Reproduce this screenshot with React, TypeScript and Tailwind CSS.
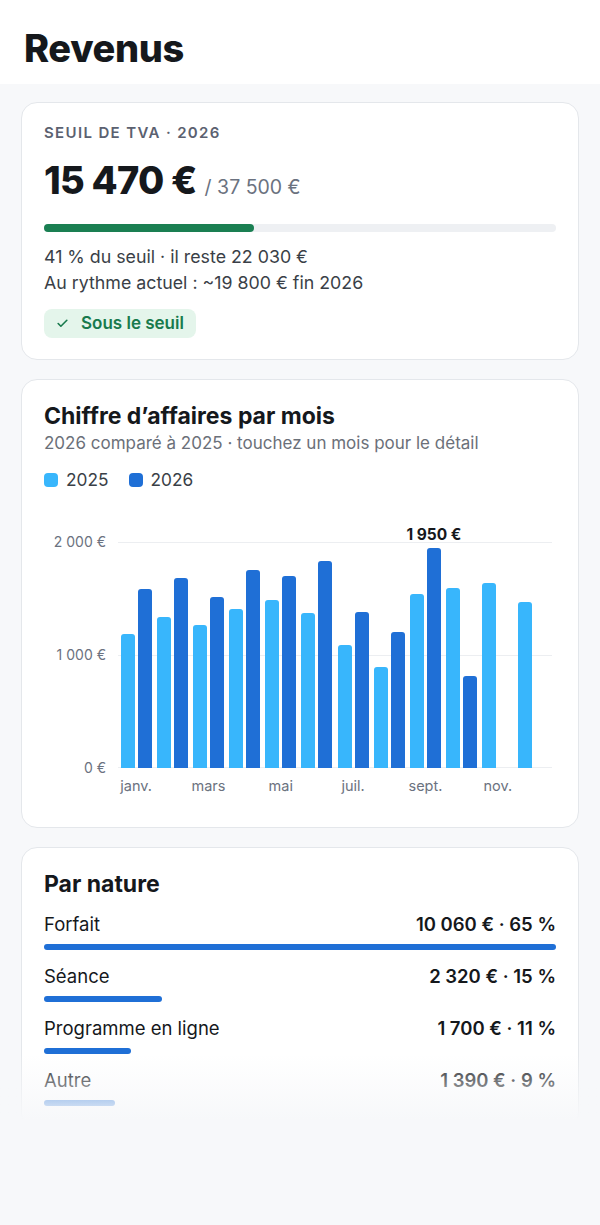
import { Check } from "lucide-react";

const months = [
  "janv.",
  "févr.",
  "mars",
  "avr.",
  "mai",
  "juin",
  "juil.",
  "août",
  "sept.",
  "oct.",
  "nov.",
  "déc.",
];

const sales2025 = [1190, 1340, 1270, 1410, 1490, 1370, 1090, 890, 1540, 1590, 1640, 1470];
const sales2026: (number | null)[] = [1580, 1680, 1510, 1750, 1700, 1830, 1380, 1200, 1950, 810, null, null];

const CHART_MAX = 2000;
const PLOT_H = 226;

const natures = [
  { label: "Forfait", amount: "10 060 €", pct: 65 },
  { label: "Séance", amount: "2 320 €", pct: 15 },
  { label: "Programme en ligne", amount: "1 700 €", pct: 11 },
  { label: "Autre", amount: "1 390 €", pct: 9 },
];

const Card = ({ children, className = "" }: { children: React.ReactNode; className?: string }) => (
  <section className={`rounded-2xl border border-[#e4e7eb] bg-white px-[22px] ${className}`}>{children}</section>
);

const MonthlyChart = () => {
  const best = Math.max(...sales2026.map((v) => v ?? 0));

  return (
    <div className="mt-[50px] flex">
      {/* y axis */}
      <div className="-mt-2 flex h-[242px] w-[62px] flex-col items-end justify-between text-[14px] leading-4 text-[#6b7280]">
        <span>2 000 €</span>
        <span>1 000 €</span>
        <span>0 €</span>
      </div>

      <div className="ml-3 mr-1 flex-1">
        <div className="relative" style={{ height: PLOT_H }}>
          <div className="absolute inset-x-0 top-0 h-px bg-[#eceef1]" />
          <div className="absolute inset-x-0 top-1/2 h-px bg-[#eceef1]" />
          <div className="absolute inset-x-0 bottom-0 h-px bg-[#eceef1]" />

          <div className="relative flex h-full items-end">
            {months.map((m, i) => {
              const cur = sales2026[i];
              return (
                <div key={m} className="flex flex-1 items-end justify-center gap-[3px]">
                  <div
                    className="w-[14px] rounded-t-[3px] bg-[#38b6fc]"
                    style={{ height: (sales2025[i] / CHART_MAX) * PLOT_H }}
                  />
                  {cur != null ? (
                    <div
                      className="relative w-[14px] rounded-t-[3px] bg-[#1f6fd6]"
                      style={{ height: (cur / CHART_MAX) * PLOT_H }}
                    >
                      {cur === best && (
                        <span className="absolute bottom-full left-1/2 mb-[5px] -translate-x-1/2 whitespace-nowrap text-[15.5px] font-bold leading-4 text-[#15181c]">
                          1 950 €
                        </span>
                      )}
                    </div>
                  ) : (
                    <div className="w-[14px]" />
                  )}
                </div>
              );
            })}
          </div>
        </div>

        {/* month labels, one every two months */}
        <div className="mt-2 flex text-[14.5px] leading-5 text-[#6b7280]">
          {months.map((m, i) => (
            <div key={m} className="flex-1 text-center">
              {i % 2 === 0 ? m : ""}
            </div>
          ))}
        </div>
      </div>
    </div>
  );
};

const App = () => {
  return (
    <div className="flex h-[1225px] flex-col overflow-hidden bg-[#f7f8fa] font-['Inter',sans-serif] text-[#15181c]">
      {/* Header */}
      <header className="h-[84px] shrink-0 bg-white px-6 pt-[25px]">
        <h1 className="text-[38px] font-extrabold leading-[46px] tracking-[-0.01em]">Revenus</h1>
      </header>

      <main className="relative flex-1 overflow-hidden">
        <div className="flex flex-col gap-[19px] px-[21px] pt-[18px]">
          {/* VAT threshold */}
          <Card className="pb-[21px] pt-[20px]">
            <p className="text-[15px] font-semibold uppercase leading-5 tracking-[0.09em] text-[#5b6170]">
              Seuil de TVA · 2026
            </p>
            <div className="mt-[14px] flex items-baseline gap-2">
              <span className="text-[38px] font-extrabold leading-[46px] tracking-[-0.02em]">15 470 €</span>
              <span className="text-[19.5px] text-[#6b7280]">/ 37 500 €</span>
            </div>
            <div className="mt-[21px] h-2 rounded-full bg-[#eef0f3]">
              <div className="h-full w-[41%] rounded-full bg-[#1a7f52]" />
            </div>
            <div className="mt-3 text-[17.8px] leading-[26px] text-[#3a3f47]">
              <p>41 % du seuil · il reste 22 030 €</p>
              <p>Au rythme actuel : ~19 800 € fin 2026</p>
            </div>
            <div className="mt-[13px] inline-flex h-[29px] items-center gap-3 rounded-lg bg-[#e4f5eb] pl-3 pr-3 text-[17px] font-semibold text-[#187a4d]">
              <Check size={13} strokeWidth={3} />
              Sous le seuil
            </div>
          </Card>

          {/* Monthly revenue */}
          <Card className="pb-[31px] pt-[22px]">
            <h2 className="text-[23px] font-bold leading-7">Chiffre d’affaires par mois</h2>
            <p className="mt-px text-[17px] leading-6 text-[#6b7079]">
              2026 comparé à 2025 · touchez un mois pour le détail
            </p>
            <div className="mt-[13px] flex items-center gap-5 text-[17.3px] leading-6 text-[#3a3f47]">
              <span className="flex items-center gap-2">
                <span className="h-[14px] w-[14px] rounded-[4px] bg-[#38b6fc]" />
                2025
              </span>
              <span className="flex items-center gap-2">
                <span className="h-[14px] w-[14px] rounded-[4px] bg-[#1f6fd6]" />
                2026
              </span>
            </div>
            <MonthlyChart />
          </Card>

          {/* Breakdown by nature */}
          <Card className="pb-[22px] pt-[22px]">
            <h2 className="text-[23px] font-bold leading-7">Par nature</h2>
            <div className="mt-[14px] flex flex-col gap-[14px]">
              {natures.map((n) => (
                <div key={n.label}>
                  <div className="flex justify-between text-[18.5px] leading-6">
                    <span>{n.label}</span>
                    <span className="font-semibold">
                      {n.amount} · {n.pct} %
                    </span>
                  </div>
                  <div className="mt-[8px] h-[6px]">
                    <div
                      className="h-full rounded-full bg-[#1f6fd6]"
                      style={{ width: `${(n.pct / natures[0].pct) * 100}%` }}
                    />
                  </div>
                </div>
              ))}
            </div>
          </Card>
        </div>

        {/* fade out where the list is cut */}
        <div className="pointer-events-none absolute inset-x-0 bottom-0 h-[66px] bg-linear-to-b from-[#f7f8fa]/0 to-[#f7f8fa]" />
      </main>

      <div className="h-[105px] shrink-0" />
    </div>
  );
};

export default App;
